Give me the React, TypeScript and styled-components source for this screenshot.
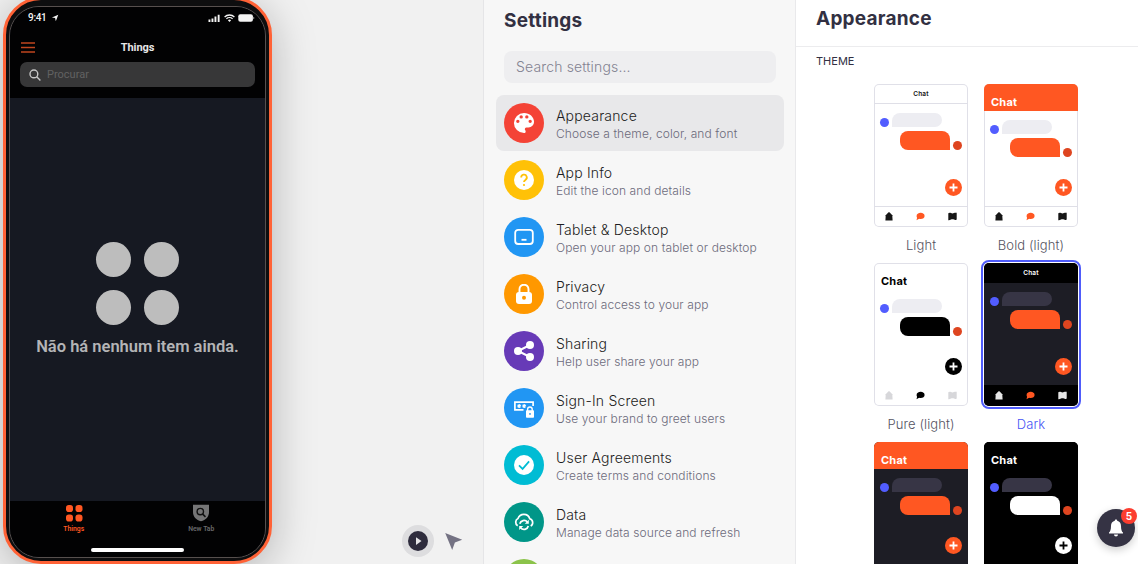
import React from 'react';
import styled, { createGlobalStyle, css } from 'styled-components';

const GlobalStyle = createGlobalStyle`
  * { box-sizing: border-box; }
  body { margin: 0; background: #fff; overflow: hidden; font-family: Inter, "Liberation Sans", sans-serif; }
`;

const Layout = styled.main`
  position: relative;
  display: flex;
  width: 1138px;
  height: 564px;
  overflow: hidden;
`;

/* ---------- Preview ---------- */

const Preview = styled.section`
  display: flex;
  align-items: flex-start;
  justify-content: space-between;
  width: 483px;
  height: 564px;
  background: #f1f1f1;
  flex: none;
  overflow: hidden;
`;

const Phone = styled.div`
  flex: none;
  width: 269px;
  height: 567px;
  margin: -3px 0 0 3px;
  padding: 5.5px 3px 3px;
  border: 3px solid #ff6236;
  border-radius: 38px;
  background: #0e0e0f;
  box-shadow: 0 8px 44px rgba(0, 0, 0, 0.26);
  font-family: Roboto, "Liberation Sans", sans-serif;
`;

const Screen = styled.div`
  display: flex;
  flex-direction: column;
  width: 257px;
  height: 552px;
  border: 1px solid #57504e;
  border-radius: 30px;
  background: #161922;
  overflow: hidden;
`;

const PhoneHeader = styled.header`
  height: 91px;
  flex: none;
  background: #020203;
`;

const StatusBar = styled.div`
  display: flex;
  align-items: center;
  justify-content: space-between;
  height: 22px;
  padding: 0 10px 0 18px;
  color: #f4f4f4;
`;

const Clock = styled.div`
  display: flex;
  align-items: center;
  gap: 4px;
  font-size: 10px;
  font-weight: 500;
  letter-spacing: -0.3px;
`;

const Signals = styled.div`
  display: flex;
  align-items: center;
  gap: 3px;
`;

const TitleBar = styled.div`
  display: grid;
  grid-template-columns: 14px 1fr 14px;
  align-items: center;
  height: 34px;
  padding: 4px 11px 0;
`;

const ScreenTitle = styled.div`
  text-align: center;
  color: #e6e6e6;
  font-size: 11px;
  font-weight: 700;
  letter-spacing: -0.1px;
`;

const PhoneSearch = styled.div`
  display: flex;
  align-items: center;
  gap: 6px;
  width: 235px;
  height: 25px;
  margin: -0.5px 10px 0;
  padding-left: 9px;
  border-radius: 7px;
  background: #373738;
  color: #626262;
  font-size: 11px;
`;

const EmptyState = styled.div`
  flex: 1;
  display: flex;
  flex-direction: column;
  align-items: center;
  padding-top: 144px;
`;

const Dots = styled.div`
  display: grid;
  grid-template-columns: 35px 35px;
  gap: 13px;
`;

const Dot = styled.span`
  height: 35px;
  border-radius: 50%;
  background: #bdbdbd;
`;

const EmptyText = styled.div`
  margin-top: 12px;
  color: #b4b4b6;
  font-size: 16.5px;
  line-height: 20px;
  font-weight: 600;
  white-space: nowrap;
`;

const PhoneTabs = styled.nav`
  display: grid;
  grid-template-columns: 1fr 1fr;
  height: 46px;
  background: #020203;
  flex: none;
`;

const PhoneTab = styled.div<{ $on?: boolean }>`
  display: flex;
  flex-direction: column;
  align-items: center;
  padding-top: 3px;
  gap: 3px;
  color: ${p => (p.$on ? '#ff5722' : '#69696b')};
  font-size: 6.8px;
  line-height: 8px;
  font-weight: 600;
`;

const HomeArea = styled.div`
  height: 10px;
  background: #020203;
  flex: none;
`;

const HomeBar = styled.div`
  width: 93px;
  height: 4px;
  margin: 1px auto 0;
  border-radius: 2px;
  background: #fff;
`;

const Tools = styled.div`
  display: flex;
  align-items: center;
  gap: 10px;
  padding: 525px 20px 0 0;
`;

const PlayButton = styled.button`
  display: flex;
  width: 32px;
  height: 32px;
  padding: 6px;
  border: 0;
  border-radius: 50%;
  background: #dddddf;
`;

/* ---------- Settings ---------- */

const Settings = styled.section`
  width: 313px;
  height: 564px;
  flex: none;
  padding: 0 11px 0 12px;
  border-left: 1px solid #e5e5e7;
  border-right: 1px solid #e9e9eb;
  background: #f7f7f7;
  overflow: hidden;
`;

const PaneTitle = styled.h1<{ $top: number }>`
  margin: 0;
  padding-top: ${p => p.$top}px;
  color: #323042;
  font-size: 19px;
  line-height: 24px;
  font-weight: 700;
  letter-spacing: 0.22px;
`;

const SettingsTitle = styled(PaneTitle)`
  padding-left: 8px;
`;

const SearchField = styled.div`
  height: 32px;
  margin: 18px 8px 12px;
  padding: 0 12px;
  border-radius: 8px;
  background: #eeeef0;
  color: #838290;
  font-size: 14px;
  font-weight: 300;
  line-height: 32px;
  letter-spacing: 0.15px;
`;

const Item = styled.div<{ $active?: boolean }>`
  display: flex;
  align-items: center;
  gap: 12px;
  height: 56px;
  margin-bottom: 1px;
  padding: 0 8px;
  border-radius: 8px;
  background: ${p => (p.$active ? '#e8e8ea' : 'transparent')};
`;

const ItemIcon = styled.div<{ $color: string }>`
  display: flex;
  align-items: center;
  justify-content: center;
  width: 40px;
  height: 40px;
  border-radius: 50%;
  background: ${p => p.$color};
  color: ${p => p.$color};
`;

const ItemName = styled.div`
  padding-top: 2px;
  color: #1d1d22;
  font-size: 14px;
  font-weight: 300;
  line-height: 19px;
  letter-spacing: 0.18px;
`;

const ItemNote = styled.div`
  color: #6c6a7b;
  font-size: 12px;
  font-weight: 300;
  line-height: 17px;
  letter-spacing: 0.1px;
  white-space: nowrap;
`;

/* ---------- Appearance ---------- */

const Appearance = styled.section`
  width: 342px;
  height: 564px;
  flex: none;
  background: #fff;
  overflow: hidden;
`;

const AppearanceHead = styled.header`
  height: 47px;
  padding-left: 20px;
  border-bottom: 1px solid #ececee;
`;

const SectionLabel = styled.div`
  padding: 7px 0 0 20px;
  color: #323042;
  font-size: 11px;
  line-height: 15px;
`;

const ThemeGrid = styled.div`
  display: grid;
  grid-template-columns: 94px 94px;
  column-gap: 16px;
  margin: 15px 0 0 78px;
`;

const ThemeOption = styled.div`
  height: 179px;
`;

const Caption = styled.div<{ $on?: boolean }>`
  margin: 10px -8px 0;
  text-align: center;
  color: ${p => (p.$on ? '#4753f5' : '#55535f')};
  font-size: 13px;
  font-weight: 300;
  line-height: 17px;
  letter-spacing: 0.1px;
`;

interface Skin {
  id: string;
  caption?: string;
  big: boolean;
  head: string;
  headText: string;
  body: string;
  line: string;
  border: string;
  inBubble: string;
  outBubble: string;
  fab: string;
  plus: string;
  icon: string;
  activeIcon: string;
  tabs: string;
  selected?: boolean;
}

const Card = styled.div<{ $s: Skin }>`
  display: flex;
  flex-direction: column;
  height: 143px;
  border-radius: 5px;
  background: ${p => p.$s.body};
  box-shadow: inset 0 0 0 1px ${p => p.$s.border};
  overflow: hidden;
  ${p => p.$s.selected && css`
    outline: 2px solid #4f5cfb;
    outline-offset: 1px;
  `}
`;

/* A coloured header has no rule under it. */
const CardHead = styled.div<{ $s: Skin }>`
  flex: none;
  height: ${p => (p.$s.big ? 27 : 20)}px;
  padding: ${p => (p.$s.big ? '12px 0 0 7px' : '4px 0 0')};
  border-bottom: 1px solid ${p => (p.$s.head === 'transparent' ? p.$s.line : p.$s.head)};
  background: ${p => p.$s.head};
  color: ${p => p.$s.headText};
  font-size: ${p => (p.$s.big ? 11 : 6.5)}px;
  font-weight: ${p => (p.$s.big ? 700 : 600)};
  line-height: 13px;
  text-align: ${p => (p.$s.big ? 'left' : 'center')};
  letter-spacing: 0.2px;
`;

const Messages = styled.div`
  flex: 1;
  padding: 9px 6px 0;
`;

const Message = styled.div<{ $out?: boolean }>`
  display: flex;
  align-items: flex-end;
  justify-content: ${p => (p.$out ? 'flex-end' : 'flex-start')};
  gap: 3px;
  margin-bottom: 4px;
`;

const Avatar = styled.span<{ $color: string }>`
  width: 9px;
  height: 9px;
  border-radius: 50%;
  background: ${p => p.$color};
`;

const Bubble = styled.span<{ $color: string; $out?: boolean }>`
  width: 50px;
  height: ${p => (p.$out ? 19 : 14)}px;
  border-radius: ${p => (p.$out ? '8px 8px 0 8px' : '8px 7px 7px 0')};
  background: ${p => p.$color};
`;

const FabRow = styled.div`
  display: flex;
  justify-content: flex-end;
  height: 27px;
  padding-right: 6.5px;
  flex: none;
`;

const Fab = styled.span<{ $fg: string }>`
  display: flex;
  height: 17px;
  color: ${p => p.$fg};
`;

const CardTabs = styled.div<{ $s: Skin }>`
  display: flex;
  justify-content: space-between;
  height: 21px;
  padding: 4.5px 11px 0;
  border-top: 1px solid ${p => p.$s.line};
  background: ${p => p.$s.tabs};
  color: ${p => p.$s.icon};
  flex: none;
`;

const BellButton = styled.button`
  position: absolute;
  left: 1097px;
  top: 509px;
  display: flex;
  align-items: center;
  justify-content: center;
  width: 38px;
  height: 38px;
  padding: 0;
  border: 0;
  border-radius: 50%;
  background: #353344;
  box-shadow: 0 3px 9px rgba(0, 0, 0, 0.2);
`;

const Badge = styled.span`
  position: absolute;
  right: -2px;
  top: -1px;
  width: 16px;
  height: 16px;
  border-radius: 50%;
  background: #fc3d2f;
  color: #fff;
  font: 700 10px/16px Inter, sans-serif;
  text-align: center;
`;

/* ---------- Icons ---------- */

const PaletteIcon = () => (
  <svg width="26" height="26" viewBox="0 0 24 24" fill="#fff">
    <path d="M12 2.7a9.3 9.3 0 1 0 0 18.6c.86 0 1.55-.7 1.55-1.55 0-.4-.15-.77-.4-1.04a1.55 1.55 0 0 1 1.16-2.58h1.82a5.17 5.17 0 0 0 5.17-5.17C21.3 6.4 17.14 2.7 12 2.7zM6.3 12a1.55 1.55 0 1 1 0-3.1 1.55 1.55 0 0 1 0 3.1zm3.1-4.1a1.55 1.55 0 1 1 0-3.1 1.55 1.55 0 0 1 0 3.1zm5.2 0a1.55 1.55 0 1 1 0-3.1 1.55 1.55 0 0 1 0 3.1zm3.1 4.1a1.55 1.55 0 1 1 0-3.1 1.55 1.55 0 0 1 0 3.1z" />
  </svg>
);

const HelpIcon = () => (
  <svg width="20" height="20" viewBox="0 0 20 20" fill="none">
    <circle cx="10" cy="10" r="10" fill="#fff" />
    <path d="M7.2 7.5a2.8 2.8 0 1 1 4.2 2.4c-.9.6-1.4 1-1.4 2.2" stroke="currentColor" strokeWidth="1.8" />
    <circle cx="10" cy="15" r="1.1" fill="currentColor" />
  </svg>
);

const TabletIcon = () => (
  <svg width="20" height="20" viewBox="0 0 20 20" fill="none" stroke="#fff">
    <rect x="1.2" y="2.8" width="17.6" height="14.2" rx="3" strokeWidth="1.8" />
    <path d="M7.5 12.8h5" strokeWidth="1.8" />
  </svg>
);

const LockIcon = () => (
  <svg width="20" height="20" viewBox="0 0 20 20" fill="none">
    <path d="M5.5 9V5.2a4.5 4.5 0 0 1 9 0V9" stroke="#fff" strokeWidth="1.9" />
    <rect x="2" y="8" width="16" height="12" rx="3" fill="#fff" />
    <circle cx="10" cy="13.7" r="2" fill="currentColor" />
  </svg>
);

const ShareIcon = () => (
  <svg width="20" height="20" viewBox="0 0 20 20" fill="#fff">
    <path d="M16 4L4 10l12 6" fill="none" stroke="#fff" strokeWidth="2" />
    <circle cx="4" cy="10" r="4" />
    <circle cx="16" cy="4" r="4" />
    <circle cx="16" cy="16" r="4" />
  </svg>
);

const SignInIcon = () => (
  <svg width="20" height="20" viewBox="0 0 20 20" fill="none">
    <path d="M9.5 11.9H.9V4.1h18.2v4" stroke="#fff" strokeWidth="1.7" />
    <path d="M5.2 6v4M3.5 7l3.4 2M6.9 7L3.5 9M10.2 6v4M8.5 7l3.4 2M11.9 7L8.5 9" stroke="#fff" strokeWidth="1.2" />
    <path d="M13.6 13v-1.7a2.3 2.3 0 0 1 4.6 0V13" stroke="#fff" strokeWidth="1.4" />
    <rect x="12" y="12.3" width="8" height="7.5" rx="0.8" fill="#fff" />
    <circle cx="16" cy="15.9" r="0.9" fill="currentColor" />
  </svg>
);

const CheckIcon = () => (
  <svg width="20" height="20" viewBox="0 0 20 20" fill="none">
    <circle cx="10" cy="10" r="10" fill="#fff" />
    <path d="M5 10.3l3.6 3.6 6.5-7.5" stroke="currentColor" strokeWidth="1.7" />
  </svg>
);

const CloudSyncIcon = () => (
  <svg width="20" height="20" viewBox="0 0 20 20" fill="none" stroke="#fff" strokeWidth="1.7">
    <path d="M3.7 13.7A4.1 4.1 0 0 1 4 6.5a6.2 6.2 0 0 1 11.8.2 4 4 0 0 1 .9 7.3" />
    <path d="M5.8 11.8a4.4 4.4 0 0 1 7.6-1.8M14.3 14a4.4 4.4 0 0 1-7.7 1.8" />
    <path d="M14.8 7.8v4h-4zM5.2 18v-4h4z" fill="#fff" stroke="none" />
  </svg>
);

const HouseGlyph = () => (
  <svg width="8" height="9" viewBox="0 0 8 9" fill="currentColor">
    <path d="M4 0l1.2 1L7.3 3.3 7.6 8.6H.4L.7 3.3 2.8 1z" />
  </svg>
);

const ChatGlyph = ({ color }: { color: string }) => (
  <svg width="9" height="9" viewBox="0 0 9 9" fill={color}>
    <path d="M4.7.8c2.2 0 3.9 1.3 3.9 3.1S6.9 7 4.7 7C4 7 3.6 7 3.1 6.8L.5 8.2l.6-2.5A3 3 0 0 1 .6 3.9C.6 2.1 2.4.8 4.7.8z" />
  </svg>
);

const MapGlyph = () => (
  <svg width="9" height="9" viewBox="0 0 9 9" fill="currentColor">
    <path d="M.3 1.2C1.2.5 2.1.5 3 1.1s2 .6 3 0S8 .6 8.700.8v6.700c-.9.7-1.800.7-2.700.1s-2-.6-3 0-1.800.9-2.700.7z" />
  </svg>
);

const BellIcon = () => (
  <svg width="16" height="18" viewBox="0 0 16 18" fill="#fff">
    <path d="M8 .5c.8 0 1.2.5 1.2 1.2C11.6 2.3 13 4.2 13 6.9c0 3.9.8 5.5 2 6.6v1H1v-1c1.2-1.1 2-2.7 2-6.6 0-2.7 1.4-4.6 3.8-5.2C6.8 1 7.200.5 8 .5zM6 15.500h4a2 2 0 0 1-4 0z" />
  </svg>
);

/* ---------- Data ---------- */

const ITEMS = [
  { name: 'Appearance', note: 'Choose a theme, color, and font', color: '#f44336', icon: <PaletteIcon />, active: true },
  { name: 'App Info', note: 'Edit the icon and details', color: '#ffc107', icon: <HelpIcon /> },
  { name: 'Tablet & Desktop', note: 'Open your app on tablet or desktop', color: '#2196f3', icon: <TabletIcon /> },
  { name: 'Privacy', note: 'Control access to your app', color: '#ff9800', icon: <LockIcon /> },
  { name: 'Sharing', note: 'Help user share your app', color: '#673ab7', icon: <ShareIcon /> },
  { name: 'Sign-In Screen', note: 'Use your brand to greet users', color: '#2196f3', icon: <SignInIcon /> },
  { name: 'User Agreements', note: 'Create terms and conditions', color: '#00bcd4', icon: <CheckIcon /> },
  { name: 'Data', note: 'Manage data source and refresh', color: '#009688', icon: <CloudSyncIcon /> },
  { name: '', note: '', color: '#8bc34a', icon: null },
];

const ORANGE = '#ff5722';

const light: Skin = {
  id: 'light', caption: 'Light', big: false, head: 'transparent', headText: '#111', body: '#fff', line: '#dfdfe7',
  border: '#e0e0e8', inBubble: '#ededf2', outBubble: ORANGE, fab: ORANGE, plus: '#fff', icon: '#161616',
  activeIcon: ORANGE, tabs: 'transparent',
};
const dark: Skin = {
  ...light, id: 'dark', caption: 'Dark', head: '#000', headText: '#fff', body: '#1d1d25', line: '#000',
  border: 'transparent', inBubble: '#373545', icon: '#e6e6e6', tabs: '#000', selected: true,
};

const SKINS: Skin[] = [
  light,
  { ...light, id: 'bold-light', caption: 'Bold (light)', big: true, head: ORANGE, headText: '#fff' },
  { ...light, id: 'pure-light', caption: 'Pure (light)', big: true, headText: '#000', line: 'transparent', outBubble: '#000', fab: '#000', icon: '#d7d7da', activeIcon: '#000' },
  dark,
  { ...dark, id: 'bold-dark', caption: undefined, big: true, head: ORANGE, selected: false },
  { ...dark, id: 'pure-dark', caption: undefined, big: true, body: '#000', outBubble: '#fff', fab: '#fff', plus: '#000', selected: false },
];

const ThemeCard = ({ skin }: { skin: Skin }) => (
  <ThemeOption>
    <Card $s={skin}>
      <CardHead $s={skin}>Chat</CardHead>
      <Messages>
        <Message>
          <Avatar $color="#525dff" />
          <Bubble $color={skin.inBubble} />
        </Message>
        <Message $out>
          <Bubble $out $color={skin.outBubble} />
          <Avatar $color="#de4520" />
        </Message>
      </Messages>
      <FabRow>
        <Fab $fg={skin.plus}>
          <svg width="17" height="17" viewBox="0 0 17 17" stroke="currentColor" strokeWidth="1.8">
            <circle cx="8.5" cy="8.5" r="8.5" fill={skin.fab} stroke="none" />
            <path d="M8.5 4.5v8M4.5 8.5h8" />
          </svg>
        </Fab>
      </FabRow>
      <CardTabs $s={skin}>
        <HouseGlyph />
        <ChatGlyph color={skin.activeIcon} />
        <MapGlyph />
      </CardTabs>
    </Card>
    {skin.caption && <Caption $on={skin.selected}>{skin.caption}</Caption>}
  </ThemeOption>
);

export default function App() {
  return (
    <>
      <GlobalStyle />
      <Layout>
        <Preview>
          <Phone>
            <Screen>
              <PhoneHeader>
                <StatusBar>
                  <Clock>
                    9:41
                    <svg width="8" height="8" viewBox="0 0 8 8" fill="currentColor"><path d="M7.3.8L4.8 7.2 4.1 4 .9 3.4z" /></svg>
                  </Clock>
                  <Signals>
                    <svg width="13" height="8" viewBox="0 0 13 8" fill="currentColor"><path d="M.5 5.5h1.9V8H.5zM3.5 4.5h1.9V8H3.5zM6.5 2.5h1.9V8H6.5zM9.7.7h1.9V8H9.7z" /></svg>
                    <svg width="11" height="8" viewBox="0 0 11 8" fill="none" stroke="currentColor" strokeWidth="1.3"><path d="M.6 3a7 7 0 0 1 9.8 0M2.4 4.9a4.4 4.4 0 0 1 6.2 0" /><path d="M5.5 8L3.9 6.3a2.3 2.3 0 0 1 3.2 0z" fill="currentColor" stroke="none" /></svg>
                    <svg width="17" height="8" viewBox="0 0 17 8" fill="currentColor"><rect x=".3" y=".3" width="14.6" height="7.4" rx="2" /><path d="M15.5 2.7c1 .3 1 2.3 0 2.6z" /></svg>
                  </Signals>
                </StatusBar>
                <TitleBar>
                  <svg width="14" height="11" viewBox="0 0 14 11" stroke="#c0461f" strokeWidth="1.7"><path d="M0 1h14M0 5.5h14M0 10h14" /></svg>
                  <ScreenTitle>Things</ScreenTitle>
                </TitleBar>
                <PhoneSearch>
                  <svg width="12" height="12" viewBox="0 0 12 12" fill="none" stroke="#c6c6c6" strokeWidth="1.4"><circle cx="4.9" cy="4.9" r="3.9" /><path d="M7.7 7.7l3.7 3.7" /></svg>
                  Procurar
                </PhoneSearch>
              </PhoneHeader>
              <EmptyState>
                <Dots><Dot /><Dot /><Dot /><Dot /></Dots>
                <EmptyText>Não há nenhum item ainda.</EmptyText>
              </EmptyState>
              <PhoneTabs>
                <PhoneTab $on>
                  <svg width="18" height="18" viewBox="0 0 18 18" fill="currentColor"><rect x="1" y="1" width="7" height="7" rx="2.8" /><rect x="10.5" y="1" width="7" height="7" rx="2.8" /><rect x="1" y="10.5" width="7" height="7" rx="2.8" /><rect x="10.5" y="10.5" width="7" height="7" rx="2.8" /></svg>
                  Things
                </PhoneTab>
                <PhoneTab>
                  <svg width="18" height="18" viewBox="0 0 18 18"><path d="M1 .8h16V8c0 4.8-3.2 8-8 9.3C4.2 16 1 12.8 1 8z" fill="#757576" /><circle cx="8.3" cy="7.6" r="3.2" fill="none" stroke="#111" strokeWidth="1.4" /><path d="M10.5 9.9l3 3" stroke="#111" strokeWidth="1.5" /></svg>
                  New Tab
                </PhoneTab>
              </PhoneTabs>
              <HomeArea><HomeBar /></HomeArea>
            </Screen>
          </Phone>
          <Tools>
            <PlayButton>
              <svg width="20" height="20" viewBox="0 0 20 20"><circle cx="10" cy="10" r="10" fill="#2e2c3d" /><path d="M8 6.2l5.5 3.8L8 13.9z" fill="#e6e6e8" /></svg>
            </PlayButton>
            <svg width="19" height="19" viewBox="0 0 19 19"><path d="M1.2 1l17 6.8-7.3 2.7-2.7 7.4z" fill="#747283" /></svg>
          </Tools>
        </Preview>

        <Settings>
          <SettingsTitle $top={9}>Settings</SettingsTitle>
          <SearchField>Search settings...</SearchField>
          {ITEMS.map((item, i) => (
            <Item key={i} $active={item.active}>
              <ItemIcon $color={item.color}>{item.icon}</ItemIcon>
              <div>
                <ItemName>{item.name}</ItemName>
                <ItemNote>{item.note}</ItemNote>
              </div>
            </Item>
          ))}
        </Settings>

        <Appearance>
          <AppearanceHead>
            <PaneTitle $top={7}>Appearance</PaneTitle>
          </AppearanceHead>
          <SectionLabel>THEME</SectionLabel>
          <ThemeGrid>
            {SKINS.map(skin => <ThemeCard key={skin.id} skin={skin} />)}
          </ThemeGrid>
        </Appearance>

        <BellButton>
          <BellIcon />
          <Badge>5</Badge>
        </BellButton>
      </Layout>
    </>
  );
}
